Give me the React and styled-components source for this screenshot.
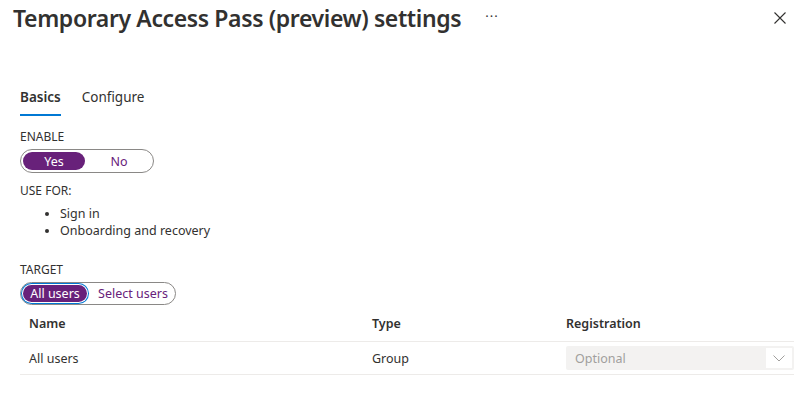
import React, { useState } from 'react';
import styled, { createGlobalStyle } from 'styled-components';

const Global = createGlobalStyle`
  body {
    margin: 0;
    background: #ffffff;
    font-family: "Noto Sans", "Open Sans", sans-serif;
    color: #323130;
  }
`;

const Page = styled.div`
  width: 794px;
  height: 397px;
  overflow: hidden;
`;

const Header = styled.header`
  display: flex;
  align-items: center;
  height: 36px;
  padding: 0 6px 0 13px;
`;

const Title = styled.h1`
  margin: 0;
  font-size: 23px;
  font-weight: 600;
  letter-spacing: -0.38px;
  color: #323130;
  white-space: nowrap;
`;

const More = styled.span`
  margin-left: 24px;
  font-size: 13px;
  color: #323130;
  letter-spacing: 1px;
  margin-top: -4px;
`;

const Close = styled.button`
  margin-left: auto;
  border: 0;
  background: none;
  padding: 0;
  width: 16px;
  height: 16px;
  display: flex;
  align-items: center;
  justify-content: center;
  cursor: pointer;
`;

const Body = styled.div`
  padding: 50px 4px 0 20px;
`;

const Tabs = styled.div`
  display: flex;
  gap: 21px;
  font-size: 13.5px;
`;

const Tab = styled.div`
  position: relative;
  padding: 2px 0 10px;
  color: #323130;
  font-weight: ${p => (p.$active ? 600 : 400)};
  &::after {
    content: '';
    position: absolute;
    left: 0;
    right: 0;
    bottom: 0;
    height: 2px;
    background: ${p => (p.$active ? '#0078d4' : 'transparent')};
  }
`;

const Label = styled.div`
  font-size: 12px;
  color: #323130;
  margin-top: ${p => p.$top || 0}px;
  line-height: 16px;
`;

const Toggle = styled.div`
  display: inline-flex;
  margin-top: 4px;
  padding: 2px;
  border: 1px solid #8a8886;
  border-radius: 12px;
  gap: ${p => p.$gap || 2}px;
`;

const Option = styled.button`
  border: 0;
  font-family: inherit;
  font-size: 12.5px;
  padding: 0;
  height: ${p => p.$h}px;
  width: ${p => p.$w}px;
  border-radius: 10px;
  cursor: pointer;
  background: ${p => (p.$on ? '#68217a' : 'transparent')};
  color: ${p => (p.$on ? '#ffffff' : '#68217a')};
  box-shadow: ${p => (p.$focus ? '0 0 0 1px #fff, 0 0 0 2px #0078d4' : 'none')};
`;

const List = styled.ul`
  margin: 6px 0 0;
  padding-left: 40px;
  font-size: 12.5px;
  line-height: 17px;
  color: #323130;
  li::marker {
    font-size: 11px;
  }
`;

const Table = styled.div`
  margin-top: 0;
  margin-right: -4px;
`;

const Row = styled.div`
  display: grid;
  grid-template-columns: 343px 194px 228px;
  align-items: center;
  height: ${p => p.$h}px;
  padding-left: 9px;
  border-bottom: 1px solid #edebe9;
  font-size: 12.5px;
  font-weight: ${p => (p.$head ? 600 : 400)};
  color: #323130;
`;

const Select = styled.div`
  display: flex;
  align-items: center;
  height: 24px;
  background: #f3f2f1;
  border-radius: 2px;
  color: #a19f9d;
  padding-left: 9px;
  font-size: 12.5px;
  font-weight: 400;
`;

const Chevron = styled.span`
  margin-left: auto;
  margin-right: 2px;
  width: 26px;
  height: 20px;
  background: #ffffff;
  display: flex;
  align-items: center;
  justify-content: center;
`;

export default function App() {
  const [enable, setEnable] = useState(true);
  const [target, setTarget] = useState('all');
  return (
    <Page>
      <Global />
      <Header>
        <Title>Temporary Access Pass (preview) settings</Title>
        <More>···</More>
        <Close aria-label="Close">
          <svg width="12" height="12" viewBox="0 0 12 12">
            <path d="M0.5 0.5 L11.5 11.5 M11.5 0.5 L0.5 11.5" stroke="#323130" strokeWidth="1.1" />
          </svg>
        </Close>
      </Header>
      <Body>
        <Tabs>
          <Tab $active>Basics</Tab>
          <Tab>Configure</Tab>
        </Tabs>
        <Label $top={13}>ENABLE</Label>
        <Toggle>
          <Option $w={62} $h={18} $on={enable} onClick={() => setEnable(true)}>Yes</Option>
          <Option $w={64} $h={18} $on={!enable} onClick={() => setEnable(false)}>No</Option>
        </Toggle>
        <Label $top={10}>USE FOR:</Label>
        <List>
          <li>Sign in</li>
          <li>Onboarding and recovery</li>
        </List>
        <Label $top={23}>TARGET</Label>
        <Toggle $gap={6}>
          <Option $w={64} $h={17} $on={target === 'all'} $focus={target === 'all'} onClick={() => setTarget('all')}>All users</Option>
          <Option $w={80} $h={17} $on={target === 'select'} onClick={() => setTarget('select')}>Select users</Option>
        </Toggle>
        <Table>
          <Row $head $h={36}>
            <span>Name</span>
            <span>Type</span>
            <span>Registration</span>
          </Row>
          <Row $h={32}>
            <span>All users</span>
            <span>Group</span>
            <Select>
              Optional
              <Chevron>
                <svg width="12" height="7" viewBox="0 0 12 7">
                  <path d="M0.5 0.5 L6 6 L11.5 0.5" fill="none" stroke="#a19f9d" strokeWidth="1" />
                </svg>
              </Chevron>
            </Select>
          </Row>
        </Table>
      </Body>
    </Page>
  );
}
